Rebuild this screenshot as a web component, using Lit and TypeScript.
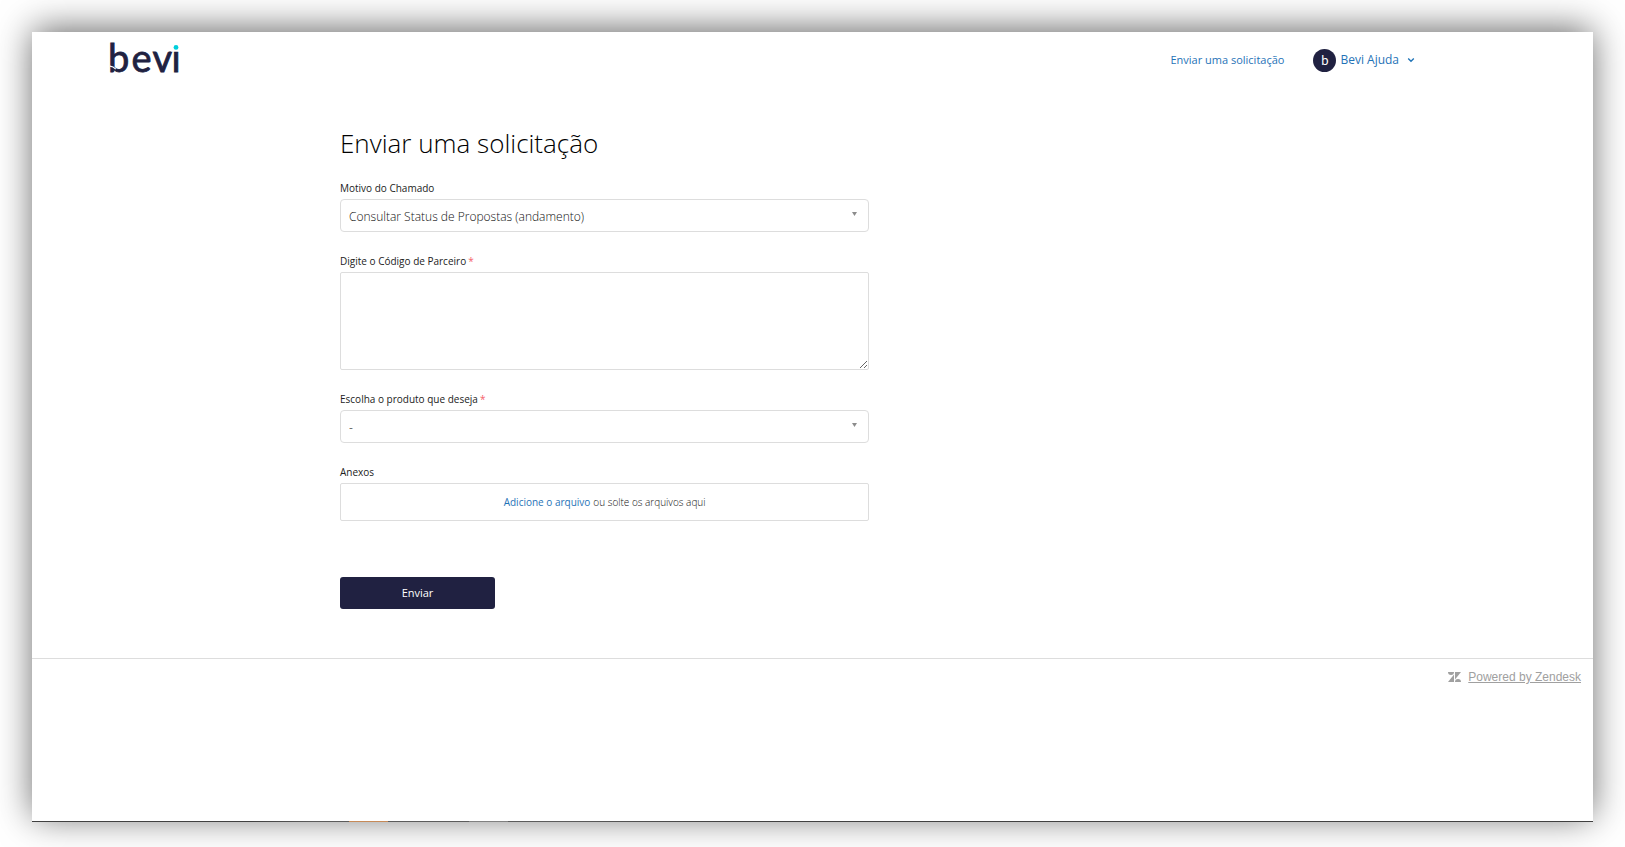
import { LitElement, html, css } from "lit";
import { customElement, state } from "lit/decorators.js";

@customElement("bevi-logo")
export class BeviLogo extends LitElement {
  static styles = css`
    :host {
      display: block;
      line-height: 0;
    }
    .logo {
      overflow: visible;
    }
    .word {
      font: 400 38px Lato, sans-serif;
      fill: #202141;
      stroke: #202141;
      stroke-width: 0.8;
    }
  `;

  render() {
    return html`
      <svg class="logo" width="70" height="34" viewBox="0 0 70 34" role="img" aria-label="bevi">
        <text class="word" x="-2 21.5 42.5 61.5" y="29">bevi</text>
        <path d="M0 23.2 C2.2 23.4 4 24.4 5.8 26.2" fill="none" stroke="#fff" stroke-width="1.2" />
        <rect x="61" y="-2" width="10" height="10.5" fill="#fff" />
        <circle cx="66" cy="4.4" r="2.4" fill="#00cfdc" />
      </svg>
    `;
  }
}

@customElement("site-header")
export class SiteHeader extends LitElement {
  static styles = css`
    :host {
      display: block;
    }
    .bar {
      display: flex;
      align-items: center;
      justify-content: space-between;
      height: 56px;
      padding: 0 11.4% 0 5%;
    }
    .nav {
      display: flex;
      align-items: center;
      gap: 29px;
    }
    .link {
      font-size: 11px;
      line-height: 16px;
      color: #1f73b7;
      text-decoration: none;
    }
    .user {
      display: flex;
      align-items: center;
      gap: 4px;
      padding: 0;
      border: 0;
      background: none;
      font: 400 12px/24px "Open Sans", sans-serif;
      color: #1f73b7;
      cursor: pointer;
    }
    .avatar {
      display: grid;
      place-items: center;
      width: 23px;
      height: 23px;
      border-radius: 50%;
      background: #202141;
      color: #fff;
      font: 400 13px/20px Lato, sans-serif;
    }
    .chevron {
      margin-left: 4px;
    }
  `;

  render() {
    return html`
      <header class="bar">
        <bevi-logo></bevi-logo>
        <nav class="nav">
          <a class="link" href="#nova">Enviar uma solicitação</a>
          <button class="user" type="button" aria-haspopup="menu">
            <span class="avatar" aria-hidden="true">b</span>
            <span>Bevi Ajuda</span>
            <svg class="chevron" width="8" height="8" viewBox="0 0 8 8" aria-hidden="true">
              <path d="M1.2 2.6 L4 5.2 L6.8 2.6" fill="none" stroke="#1f73b7" stroke-width="1.4" />
            </svg>
          </button>
        </nav>
      </header>
    `;
  }
}

@customElement("request-form")
export class RequestForm extends LitElement {
  static styles = css`
    :host {
      display: block;
    }
    .container {
      width: min(90%, 945px);
      margin: 0 auto;
    }
    .title {
      margin: 0;
      padding-top: 37px;
      font-size: 26px;
      font-weight: 300;
      line-height: 36px;
      color: #000;
    }
    .form {
      display: flex;
      flex-direction: column;
      gap: 20px;
      width: 56%;
      min-width: 280px;
      margin-top: 18px;
    }
    .field {
      display: flex;
      flex-direction: column;
      gap: 2px;
    }
    .label {
      font-size: 10px;
      line-height: 18px;
      color: #222;
    }
    .required {
      margin-left: 2px;
      color: #f5606a;
    }
    .picker {
      display: grid;
      align-items: center;
    }
    .select,
    .arrow {
      grid-area: 1 / 1;
    }
    .select {
      appearance: none;
      box-sizing: border-box;
      width: 100%;
      height: 33px;
      padding: 3px 28px 0 8px;
      border: 1px solid #ddd;
      border-radius: 4px;
      background: #fff;
      font: 300 12px/20px "Open Sans", sans-serif;
      color: #111;
    }
    .arrow {
      justify-self: end;
      margin: 0 12px 3px 0;
      pointer-events: none;
    }
    .area {
      box-sizing: border-box;
      width: 100%;
      height: 98px;
      padding: 8px;
      border: 1px solid #ddd;
      border-radius: 2px;
      font: 300 12px/20px "Open Sans", sans-serif;
      color: #111;
      resize: vertical;
    }
    .drop {
      position: relative;
      box-sizing: border-box;
      display: flex;
      align-items: center;
      justify-content: center;
      gap: 3px;
      height: 38px;
      border: 1px solid #ddd;
      border-radius: 2px;
      font-size: 10px;
      color: #111;
    }
    .add {
      color: #1f73b7;
    }
    .hint {
      font-weight: 300;
    }
    .file {
      position: absolute;
      inset: 0;
      width: 100%;
      opacity: 0;
      cursor: pointer;
    }
    .submit {
      align-self: flex-start;
      width: 155px;
      height: 32px;
      margin-top: 36px;
      padding: 0;
      border: 0;
      border-radius: 3px;
      background: #202141;
      font: 400 11px/30px "Open Sans", sans-serif;
      color: #fff;
      cursor: pointer;
    }
  `;

  @state() private reasons = ["Consultar Status de Propostas (andamento)"];
  @state() private products = ["-"];

  private picker(id: string, options: string[]) {
    return html`
      <div class="picker">
        <select class="select" id=${id}>
          ${options.map((o) => html`<option>${o}</option>`)}
        </select>
        <svg class="arrow" width="5" height="4" viewBox="0 0 5 4" aria-hidden="true">
          <path d="M0 0 H5 L2.5 4 Z" fill="#8c8c8c" />
        </svg>
      </div>
    `;
  }

  render() {
    return html`
      <main class="container">
        <h1 class="title">Enviar uma solicitação</h1>
        <form class="form">
          <div class="field">
            <label class="label" for="reason">Motivo do Chamado</label>
            ${this.picker("reason", this.reasons)}
          </div>
          <div class="field">
            <label class="label" for="code">Digite o Código de Parceiro<span class="required">*</span></label>
            <textarea class="area" id="code"></textarea>
          </div>
          <div class="field">
            <label class="label" for="product">Escolha o produto que deseja<span class="required">*</span></label>
            ${this.picker("product", this.products)}
          </div>
          <div class="field">
            <label class="label" for="files">Anexos</label>
            <div class="drop">
              <span class="add">Adicione o arquivo</span>
              <span class="hint">ou solte os arquivos aqui</span>
              <input class="file" id="files" type="file" multiple />
            </div>
          </div>
          <button class="submit" type="button">Enviar</button>
        </form>
      </main>
    `;
  }
}

@customElement("app-root")
export class AppRoot extends LitElement {
  static styles = css`
    :host {
      display: flex;
      box-sizing: border-box;
      min-height: 100vh;
      padding: 32px 32px 25px;
      background: #fff;
      overflow: hidden;
      font-family: "Open Sans", sans-serif;
    }
    .window {
      flex: 1;
      display: flex;
      flex-direction: column;
      background: #fff;
      box-shadow: 0 -4px 34px -1px rgba(0, 0, 0, 0.6);
    }
    .footer {
      display: flex;
      flex: 1;
      align-items: flex-start;
      justify-content: flex-end;
      gap: 7px;
      margin-top: 49px;
      padding: 9px 12px;
      border-top: 1px solid #ddd;
    }
    .mark {
      margin-top: 4px;
    }
    .powered {
      font: 400 12px/18px "Liberation Sans", Arial, sans-serif;
      color: #a0a0a0;
    }
    .strip {
      height: 1px;
      background: linear-gradient(
        90deg,
        #404040 0 14%,
        #5c5c5c 18% 20.3%,
        #c68a58 20.3% 22.8%,
        #5c5c5c 22.8% 28%,
        #808080 28% 30.5%,
        #5c5c5c 30.5% 34%,
        #404040 45%
      );
    }
  `;

  render() {
    return html`
      <div class="window">
        <site-header></site-header>
        <request-form></request-form>
        <footer class="footer">
          <svg class="mark" width="13" height="10" viewBox="0 0 13 10" aria-hidden="true">
            <g fill="#a0a0a0">
              <path d="M0 0 H6 A3 3 0 0 1 0 0 Z" />
              <path d="M6 2.6 V10 H0 Z" />
              <path d="M7 0 H13 L7 7.4 Z" />
              <path d="M7 10 A3 3 0 0 1 13 10 Z" />
            </g>
          </svg>
          <a class="powered" href="#zendesk">Powered by Zendesk</a>
        </footer>
        <div class="strip"></div>
      </div>
    `;
  }
}
